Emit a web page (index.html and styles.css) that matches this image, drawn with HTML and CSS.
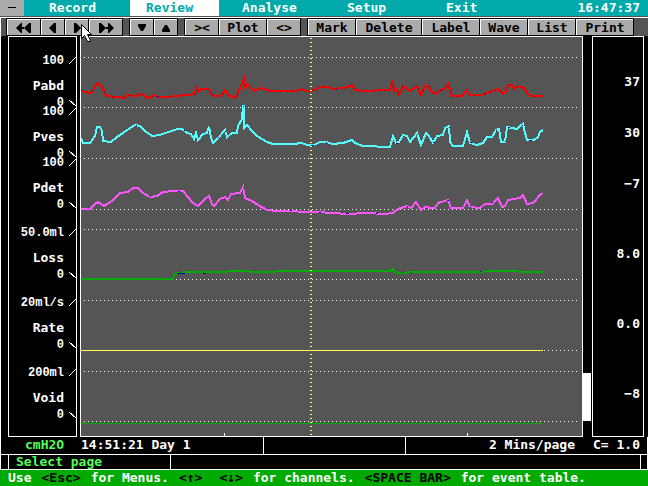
FILE: index.html
```html
<!DOCTYPE html>
<html lang="en">
<head>
<meta charset="utf-8">
<title>Review</title>
<link rel="stylesheet" href="styles.css">
</head>
<body>
<header class="menubar">
  <button class="system" type="button" aria-label="System menu"><svg width="8" height="2" viewBox="0 0 8 2"><path d="M0 0H8V1H0Z"/></svg></button>
  <nav class="menus">
    <a href="#">Record</a>
    <a href="#" class="active">Review</a>
    <a href="#">Analyse</a>
    <a href="#">Setup</a>
    <a href="#">Exit</a>
  </nav>
  <time class="clock">16:47:37</time>
</header>

<div class="toolbar">
  <div class="group">
    <button class="w2" type="button" aria-label="First"><svg width="16" height="10" viewBox="0 0 16 10"><path d="M0 5L5 0H6V10H5ZM6 4H8V6H6ZM8 5L13 0H15V10H13Z"/></svg></button>
    <button class="w1" type="button" aria-label="Back"><svg width="8" height="10" viewBox="0 0 8 10"><path d="M0 5L5 0H7V10H5Z"/></svg></button>
    <button class="w1" type="button" aria-label="Forward"><svg width="8" height="10" viewBox="0 0 8 10"><path d="M8 5L3 0H1V10H3Z"/></svg></button>
    <button class="w2" type="button" aria-label="Last"><svg width="16" height="10" viewBox="0 0 16 10"><path d="M16 5L11 0H10V10H11ZM10 4H8V6H10ZM8 5L3 0H1V10H3Z"/></svg></button>
  </div>
  <div class="group">
    <button class="w1" type="button" aria-label="Down"><svg width="8" height="8" viewBox="0 0 8 8"><path d="M0 0H8V2L5 7H3L0 2Z"/></svg></button>
    <button class="w1" type="button" aria-label="Up"><svg width="8" height="8" viewBox="0 0 8 8"><path d="M0 8H8V6L5 1H3L0 6Z"/></svg></button>
  </div>
  <div class="group">
    <button class="w2" type="button">&gt;&lt;</button>
    <button class="w4" type="button">Plot</button>
    <button class="w2" type="button">&lt;&gt;</button>
  </div>
  <div class="group">
    <button class="w4" type="button">Mark</button>
    <button class="w6" type="button">Delete</button>
    <button class="w5" type="button">Label</button>
    <button class="w4" type="button">Wave</button>
    <button class="w4" type="button">List</button>
    <button class="w5" type="button">Print</button>
  </div>
</div>

<main class="review">
  <section class="channels">
    <div class="channel"><span class="scale">100<svg viewBox="0 0 7 8"><path d="M0 7L7 0"/></svg></span><span class="name">Pabd</span><span class="scale">0<svg viewBox="0 0 7 8"><path d="M0 1L7 7"/></svg></span></div>
    <div class="channel"><span class="scale">100<svg viewBox="0 0 7 8"><path d="M0 7L7 0"/></svg></span><span class="name">Pves</span><span class="scale">0<svg viewBox="0 0 7 8"><path d="M0 1L7 7"/></svg></span></div>
    <div class="channel"><span class="scale">100<svg viewBox="0 0 7 8"><path d="M0 7L7 0"/></svg></span><span class="name">Pdet</span><span class="scale">0<svg viewBox="0 0 7 8"><path d="M0 1L7 7"/></svg></span></div>
    <div class="channel flow"><span class="scale">50.0ml<svg viewBox="0 0 7 8"><path d="M0 7L7 0"/></svg></span><span class="name">Loss</span><span class="scale">0<svg viewBox="0 0 7 8"><path d="M0 1L7 7"/></svg></span></div>
    <div class="channel flow"><span class="scale">20ml/s<svg viewBox="0 0 7 8"><path d="M0 7L7 0"/></svg></span><span class="name">Rate</span><span class="scale">0<svg viewBox="0 0 7 8"><path d="M0 1L7 7"/></svg></span></div>
    <div class="channel flow"><span class="scale">200ml<svg viewBox="0 0 7 8"><path d="M0 7L7 0"/></svg></span><span class="name">Void</span><span class="scale">0<svg viewBox="0 0 7 8"><path d="M0 1L7 7"/></svg></span></div>
  </section>

  <section class="plot">
    <svg viewBox="81 37 501 399" preserveAspectRatio="none" role="img" aria-label="Channel traces">
      <g class="guides">
        <path d="M84 57.5H580M84 107.5H580M84 158.5H580M84 209.5H580M84 229.5H580M84 279.5H580M84 300.5H580M84 350.5H580M84 371.5H580M84 421.5H580"/>
      </g>
      <path class="ticks" d="M224.5 433V436M467.5 433V436"/>
      <polyline class="trace pabd" points="81,90 84,92 91,93 93,90 95,86 98,83 100,85 103,88 105,94 107,96 125,98 127,95 137,96 139,94 144,95 147,98 152,97 154,95 158,97 167,97 177,96 188,95 195,94 196,87 197,87 198,92 201,89 209,89 211,94 214,96 221,96 225,90 229,96 236,97 238,93 241,86 244,79 245,87 247,84 250,87 255,91 261,88 270,91 297,91 302,89 307,91 315,90 320,87 328,87 332,89 345,88 352,85 355,90 363,91 390,90 393,80 394,91 396,89 399,95 403,86 410,91 417,86 421,95 425,86 428,86 432,92 436,94 440,90 445,89 448,84 451,93 452,96 462,96 467,90 470,95 482,95 487,93 493,91 498,89 503,94 506,91 508,85 512,85 514,89 518,86 524,88 527,93 531,96 543,96"/>
      <polyline class="shade" points="81,90 84,92 91,93 93,90 95,86 98,83 100,85 103,88 105,94 107,96 125,98 127,95 137,96 139,94 144,95 147,98 152,97 154,95 158,97 167,97 177,96 188,95 195,94 196,87 197,87 198,92 201,89 209,89 211,94 214,96 221,96 225,90 229,96 236,97 238,93 241,86 244,79 245,87 247,84 250,87 255,91 261,88 270,91 297,91 302,89 307,91 315,90 320,87 328,87 332,89 345,88 352,85 355,90 363,91 390,90 393,80 394,91 396,89 399,95 403,86 410,91 417,86 421,95 425,86 428,86 432,92 436,94 440,90 445,89 448,84 451,93 452,96 462,96 467,90 470,95 482,95 487,93 493,91 498,89 503,94 506,91 508,85 512,85 514,89 518,86 524,88 527,93 531,96 543,96"/>
      <polyline class="trace pves" points="81,138 83,143 90,143 95,136 97,127 100,127 102,131 103,141 111,142 117,137 123,133 130,128 135,125 140,126 145,131 152,136 160,135 165,133 172,131 177,129 182,129 187,133 191,134 194,139 196,133 198,140 203,134 207,133 209,126 211,138 213,143 218,138 225,130 227,137 232,133 237,133 238,126 242,119 243,106 244,106 244,128 247,125 252,131 257,136 267,142 273,144 293,144 302,143 307,145 314,145 320,142 327,142 332,144 343,143 352,140 355,143 363,146 390,147 393,136 396,143 399,142 403,135 407,136 410,142 417,133 421,145 426,133 429,136 433,143 437,136 443,135 445,128 449,126 450,142 453,146 463,146 467,132 470,143 477,145 483,143 487,137 492,137 496,130 499,129 501,142 505,142 507,127 517,129 520,126 523,124 524,129 527,140 534,140 538,137 540,132 543,130"/>
      <polyline class="trace pdet" points="81,209 90,209 95,204 98,202 104,206 112,201 120,193 128,192 133,188 138,188 143,193 150,197 157,196 163,192 173,191 183,191 188,197 193,203 198,206 205,199 209,196 212,204 214,206 220,199 225,197 228,200 231,194 240,193 243,187 245,198 252,201 258,205 267,210 277,211 293,211 303,212 318,212 347,214 367,213 385,214 393,213 398,209 407,206 411,208 416,202 421,210 425,207 432,208 435,208 438,203 448,200 451,208 463,208 467,200 470,207 480,208 485,204 492,204 498,198 502,207 505,206 508,200 520,198 523,195 527,204 533,203 542,193"/>
      <polyline class="trace loss" points="81,279 173,279 174,275 177,273 190,272 215,272 240,271 260,272 290,271 390,271 393,269 395,272 400,273 415,272 475,272 495,271 543,272"/>
      <path class="thin" d="M81 423.5H542"/>
      <path class="rate" d="M81 350.5H543"/>
      <path class="specks" d="M136 125.5h1M184 130.5h1M209 126.5h1M225 131.5h1M243 106.5h1M218 137.5h1M311 145.5h3M326 142.5h1M396 143.5h2M417 134.5h1M433 142.5h2M449 127.5h1M470 142.5h2M496 130.5h1M505 141.5h1M508 127.5h2M522 125.5h1M529 140.5h3M150 196.5h1M178 191.5h2M243 187.5h1M290 210.5h2M319 212.5h2M346 213.5h3M376 213.5h2M407 206.5h1M447 200.5h2M470 207.5h1M492 202.5h1M177 273.5h8M203 273.5h3M401 272.5h1M403 272.5h1M411 272.5h1M480 271.5h1M237 97.5h1M157 96.5h2M336 89.5h1M440 90.5h1M523 87.5h1"/>
      <path class="cursor-line" d="M311 38V436"/>
    </svg>
  </section>

  <div class="scroll"><div class="thumb"></div></div>

  <section class="readouts">
    <output class="channel">37</output>
    <output class="channel">30</output>
    <output class="channel">−7</output>
    <output class="channel flow">8.0</output>
    <output class="channel flow">0.0</output>
    <output class="channel flow">−8</output>
  </section>
</main>

<section class="status">
  <span class="units">cmH2O</span>
  <span class="elapsed">14:51:21 Day 1</span>
  <span class="cell"></span>
  <span class="cell rate-text">2 Mins/page</span>
  <span class="calibration">C= 1.0</span>
</section>
<section class="prompt">
  <span class="message">Select page</span>
  <span class="cell"></span>
</section>
<footer class="help">
  <span>Use</span><kbd>&lt;Esc&gt;</kbd><span>for Menus.</span><kbd>&lt;↑&gt;</kbd><kbd class="second">&lt;↓&gt;</kbd><span>for channels.</span><kbd>&lt;SPACE BAR&gt;</kbd><span>for event table.</span>
</footer>
<svg class="pointer" width="12" height="18" viewBox="0 0 12 18"><path d="M.5 .5V14.5L3.5 11.5L6.5 17.5H9V15.5L6.5 10.5H10.5Z"/></svg>
</body>
</html>
```
FILE: styles.css
```css
:root {
  --teal: #00aaaa;
  --green: #00aa00;
  --lime: #55ff55;
  --grey: #aaaaaa;
  --dark: #555555;
  --white: #ffffff;
}

* {
  box-sizing: border-box;
}

body {
  display: flex;
  flex-direction: column;
  min-height: 100vh;
  margin: 0;
  background: #000;
  color: var(--white);
  font: bold 13px/16px "DejaVu Sans Mono", "Liberation Mono", monospace;
  white-space: nowrap;
}

button,
kbd {
  font: inherit;
}

button {
  display: flex;
  align-items: center;
  justify-content: center;
  padding: 0;
  border: 0;
  background: var(--grey);
  color: #000;
}

/* Menu bar */
.menubar {
  display: flex;
  height: 17px;
  padding-right: 8px;
  border-bottom: 1px solid var(--dark);
  background: var(--teal);
}

.system {
  width: 24px;
  margin-right: 9px;
}

.menus {
  display: grid;
  flex: 1;
  grid-template-columns: 97px 96px 105px 99px 1fr;
}

.menus a {
  justify-self: start;
  padding: 0 26px 0 16px;
  color: inherit;
  text-decoration: none;
}

.menus .active {
  background: var(--white);
  color: var(--teal);
}

/* Toolbar */
.toolbar {
  display: flex;
  gap: 6px;
  padding: 0 6px 0 5px;
  border-top: 1px solid var(--white);
  border-left: 1px solid var(--white);
  background: var(--dark);
}

.group {
  display: flex;
  gap: 1px;
  height: 18px;
  border: 1px solid #000;
  background: #000;
}

.group button {
  border-top: 1px solid var(--white);
  border-left: 1px solid var(--white);
}

.w1 { width: 23px; }
.w2 { width: 33px; }
.w4 { width: 47px; }
.w5 { width: 57px; }
.w6 { width: 65px; }

/* Traces */
.review {
  display: grid;
  flex: 1;
  grid-template-columns: 69px 3px minmax(0, 1fr) 9px 52px;
  padding: 0 4px 0 7px;
  border-left: 1px solid var(--white);
}

.channels,
.plot,
.readouts {
  border: 1px solid var(--white);
}

.channels,
.readouts {
  padding-top: 20px;
}

.channel {
  display: flex;
  flex-direction: column;
  justify-content: space-between;
  align-items: flex-end;
  height: 50px;
  margin-bottom: 1px;
}

.channel.flow {
  margin-top: 20px;
}

.scale {
  display: flex;
  gap: 5px;
  height: 8px;
  font-family: "Liberation Mono", monospace;
  font-size: 12px;
  line-height: 8px;
}

.scale svg {
  width: 7px;
  height: 8px;
  overflow: visible;
  fill: none;
  stroke: var(--white);
  shape-rendering: crispEdges;
}

.name {
  padding: 8px 12px 0 0;
}

.plot {
  grid-column: 3;
  background: var(--dark);
}

.plot svg {
  display: block;
  width: 100%;
  height: 100%;
  fill: none;
  shape-rendering: crispEdges;
}

.guides {
  stroke: var(--white);
  stroke-dasharray: 1 3;
}

.ticks { stroke: var(--white); }
.trace { stroke-width: 2; }
.pabd { stroke: #ff0000; }
.shade { stroke: #aa0000; stroke-dasharray: 2 5 1 3; }
.pves { stroke: #55ffff; }
.pdet { stroke: #ff55ff; }
.loss { stroke: var(--green); }
.thin { stroke: var(--green); }
.rate { stroke: #ffff55; }
.specks { stroke: #0000aa; }

.cursor-line {
  stroke: #ffff55;
  stroke-width: 2;
  stroke-dasharray: 1 3;
}

.scroll {
  display: flex;
  flex-direction: column;
  justify-content: flex-end;
  padding: 0 1px 16px 0;
}

.thumb {
  height: 48px;
  background: var(--white);
}

.readouts .channel {
  justify-content: center;
  padding-right: 3px;
}

/* Status rows */
.status,
.prompt {
  border-left: 1px solid var(--white);
  border-right: 1px solid var(--white);
  border-bottom: 1px solid var(--white);
}

.status {
  display: grid;
  grid-template-columns: 80px 182fr 142fr 178fr 64px;
  height: 18px;
}

.units {
  padding-left: 24px;
  color: var(--lime);
}

.cell {
  border-left: 1px solid var(--white);
}

.rate-text {
  padding-right: 8px;
  text-align: right;
}

.calibration {
  padding-right: 7px;
  text-align: right;
}

.prompt {
  display: grid;
  grid-template-columns: 162px 1fr;
  height: 15px;
  padding: 0 6px 0 7px;
  line-height: 13px;
}

.message {
  padding-left: 7px;
  border-left: 1px solid var(--white);
  color: var(--lime);
}

.prompt .cell {
  border-right: 1px solid var(--white);
}

.help {
  display: flex;
  gap: 10px;
  padding-left: 8px;
  background: var(--green);
}

.help kbd {
  color: #000;
}

.help .second {
  margin-left: 7px;
}

/* Mouse pointer floats over the toolbar */
.pointer {
  position: absolute;
  top: 24px;
  left: 81px;
  fill: var(--white);
  stroke: #000;
}
```
